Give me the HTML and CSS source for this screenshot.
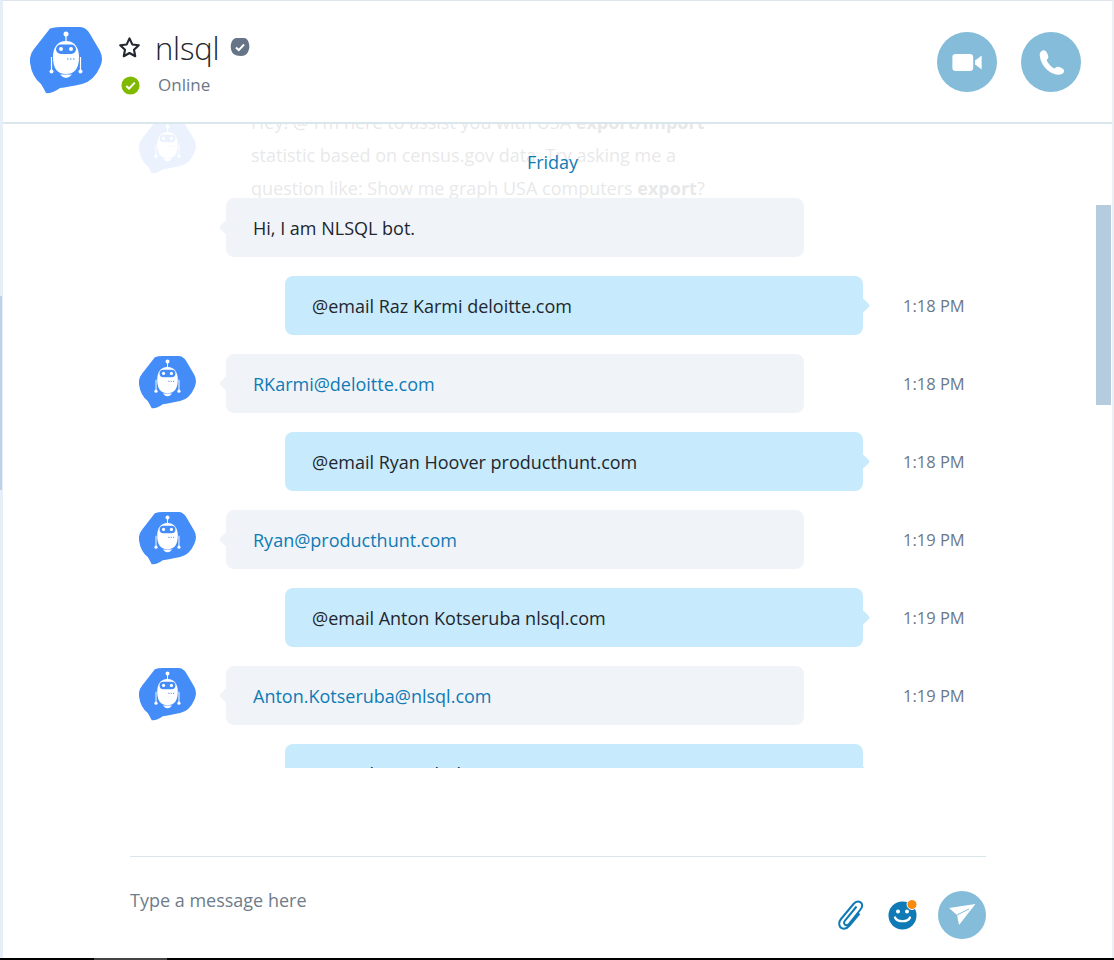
FILE: index.html
```html
<!DOCTYPE html>
<html lang="en">
<head>
<meta charset="utf-8">
<title>nlsql chat</title>
<link rel="stylesheet" href="styles.css">
</head>
<body>
<svg class="defs" width="0" height="0" aria-hidden="true">
  <symbol id="bot" viewBox="0 0 72 67">
    <path fill="#448cf8" d="M20 1.500Q24 0 30 0L50 0Q56 0 60 7L70 24Q74 32 70 40Q64 54 52 57Q38 60 30 61Q22 67 16 66Q13 60 11 57Q2 50 0 36Q-1 28 4 22Z"/>
    <circle cx="36" cy="7" r="2.500" fill="#fff"/>
    <path d="M36 8V16M21.500 30V44M50.500 30V44" stroke="#fff" stroke-width="1.200" fill="none"/>
    <circle cx="21.500" cy="44.500" r="2" fill="#fff"/>
    <circle cx="50.500" cy="44.500" r="2" fill="#fff"/>
    <path fill="#fff" d="M36 14C45 14 49 21 49 30C49 41 45 47 36 47C27 47 23 41 23 30C23 21 27 14 36 14Z"/>
    <path fill="#fff" d="M30 47.500H42Q39 51 36 51Q33 51 30 47.500Z"/>
    <rect x="26" y="17.500" width="20" height="9.500" rx="4.750" fill="#448cf8"/>
    <circle cx="31" cy="22" r="2" fill="#fff"/>
    <circle cx="41" cy="22" r="2" fill="#fff"/>
    <path d="M37 32h1.500M40 32h1.500M43 32h1.500" stroke="#448cf8" stroke-width="1.200"/>
  </symbol>
</svg>
<div class="app">
  <div class="frame">
    <header class="header">
      <svg class="avatar-large"><use href="#bot"/></svg>
      <div class="identity">
        <div class="title-row">
          <svg class="star" viewBox="0 0 24 24"><path d="M12 2.500l2.900 6.300 6.800.8-5 4.700 1.300 6.800-6-3.400-6 3.400 1.300-6.800-5-4.700 6.800-.8z" fill="none" stroke="#22262e" stroke-width="2.200" stroke-linejoin="round"/></svg>
          <span class="name">nlsql</span>
          <svg class="verified" viewBox="0 0 20 20"><path d="M6 1H14Q17 1 18.500 5Q20.500 10 18 15Q16 19 11 19Q5 19 2.500 16Q0 12 1 7Q2 2 6 1Z" fill="#667487"/><path d="M6 10.500l2.800 2.600L14 7.500" fill="none" stroke="#fff" stroke-width="2"/></svg>
        </div>
        <div class="status-row">
          <svg class="online-dot" viewBox="0 0 20 20"><circle cx="10" cy="10" r="9.500" fill="#7fb900"/><path d="M5.500 10.500l3 2.800L14.500 7" fill="none" stroke="#fff" stroke-width="2.200"/></svg>
          <span class="status">Online</span>
        </div>
      </div>
      <div class="actions">
        <button class="round-btn" type="button" aria-label="Video call">
          <svg class="video" viewBox="0 0 32 18"><rect x="0" y="0" width="22" height="18" rx="3.500" fill="#fff"/><path d="M24 7L31 1.500V16.500L24 11Z" fill="#fff"/></svg>
        </button>
        <button class="round-btn" type="button" aria-label="Call">
          <svg class="phone" viewBox="0 0 28 28"><path d="M5 1.500C3 2 1.500 4 1.800 7C2.500 13 5.500 18 10 22C14 25.500 19 27 23 26.500C25.500 26 27 24.500 27 23C27 21.500 26 20.500 24 19.500C22 18.500 20.500 18 19.500 18.500L17 20.200C14.500 19.500 9.800 14.500 9 11.500L10.500 9.500C11 8.500 10.500 6.500 9.500 4.500C8.500 2.500 7 1 5 1.500Z" fill="#fff"/></svg>
        </button>
      </div>
    </header>

    <main class="conversation">
      <div class="faded">
        <svg class="avatar-small faded-avatar"><use href="#bot"/></svg>
        <div class="faded-text">Hey! @ I'm here to assist you with USA <b>export/import</b> statistic based on census.gov data. Try asking me a question like: Show me graph USA computers <b>export</b>?</div>
      </div>
      <div class="day">Friday</div>

      <div class="row row-bot">
        <span class="avatar-slot"></span>
        <div class="bubble bot">Hi, I am NLSQL bot.</div>
      </div>
      <div class="row row-user">
        <div class="bubble user">@email Raz Karmi deloitte.com</div>
        <span class="time">1:18 PM</span>
      </div>
      <div class="row row-bot">
        <svg class="avatar-small"><use href="#bot"/></svg>
        <div class="bubble bot link">RKarmi@deloitte.com</div>
        <span class="time">1:18 PM</span>
      </div>
      <div class="row row-user">
        <div class="bubble user">@email Ryan Hoover producthunt.com</div>
        <span class="time">1:18 PM</span>
      </div>
      <div class="row row-bot">
        <svg class="avatar-small"><use href="#bot"/></svg>
        <div class="bubble bot link">Ryan@producthunt.com</div>
        <span class="time">1:19 PM</span>
      </div>
      <div class="row row-user">
        <div class="bubble user">@email Anton Kotseruba nlsql.com</div>
        <span class="time">1:19 PM</span>
      </div>
      <div class="row row-bot">
        <svg class="avatar-small"><use href="#bot"/></svg>
        <div class="bubble bot link">Anton.Kotseruba@nlsql.com</div>
        <span class="time">1:19 PM</span>
      </div>
      <div class="row row-user">
        <div class="bubble user">@email Lui @alrek.com</div>
      </div>
    </main>

    <footer class="composer">
      <div class="placeholder">Type a message here</div>
      <div class="tools">
        <svg class="clip" viewBox="0 0 28 30"><path d="M19.500 6.500L8 20.500C6.500 22.500 7 24 8.200 24.800C9.500 25.600 11 25 12.500 23.300L23.500 9.500C26 6.500 25.500 3.500 23.300 2.200C21 1 18.500 1.700 16.500 4L4 19C1.500 22 1.500 26 4.200 27.800C7 29.500 10 28.500 12.500 25.500L22.500 13.500" fill="none" stroke="#0f7ab5" stroke-width="2"/></svg>
        <svg class="smile" viewBox="0 0 30 30"><circle cx="14.500" cy="15.500" r="14" fill="#0f7ab5"/><circle cx="10" cy="11.500" r="2" fill="#fff"/><circle cx="19" cy="11.500" r="2" fill="#fff"/><path d="M7 17.500C9 22.500 20 22.500 22 17.500" fill="none" stroke="#fff" stroke-width="2.200" stroke-linecap="round"/><circle cx="24" cy="4.500" r="5" fill="#f88a0f" stroke="#fff" stroke-width="1"/></svg>
        <button class="send" type="button" aria-label="Send">
          <svg viewBox="0 0 27 22"><path d="M0 4L26.500 0L10 21L8 11Z" fill="#fff"/><path d="M8 11L20 5" stroke="#84bcd9" stroke-width="1"/></svg>
        </button>
      </div>
    </footer>

    <div class="scroll-thumb"></div>
    <div class="left-mark"></div>
  </div>
  <div class="taskbar"><div class="taskbar-thumb"></div></div>
</div>
</body>
</html>
```

FILE: styles.css
```css
* { box-sizing: border-box; }
html, body { margin: 0; padding: 0; background: #fff; }
body { font-family: "Open Sans", "Noto Sans", sans-serif; color: #22262e; overflow: hidden; }
.defs { position: absolute; }
.app { width: 1114px; height: 960px; display: flex; flex-direction: column; }
.frame {
  position: relative;
  height: 958px;
  display: flex;
  flex-direction: column;
  border-top: 1px solid #dfe5ec;
  border-left: 3px solid #e6eef7;
  border-right: 2px solid #eceff3;
}
.taskbar { height: 2px; background: #000; }
.taskbar-thumb { width: 73px; height: 2px; margin-left: 94px; background: #444; }

.header {
  height: 123px;
  flex: none;
  display: flex;
  align-items: flex-start;
  padding: 26px 31px 0 27px;
  border-bottom: 2px solid #d9e6ec;
  background: #fff;
}
.avatar-large { width: 72px; height: 67px; flex: none; }
.identity { margin-left: 16px; display: flex; flex-direction: column; }
.title-row { display: flex; align-items: center; height: 42px; }
.star { width: 23px; height: 23px; flex: none; margin-top: -2px; }
.name { margin-left: 14px; font-size: 31px; font-weight: 300; line-height: 42px; letter-spacing: -0.2px; color: #22262e; }
.verified { width: 20px; height: 20px; margin-left: 11px; margin-top: -2px; }
.status-row { display: flex; align-items: center; margin-top: 4px; padding-left: 3px; height: 24px; }
.online-dot { width: 19px; height: 19px; }
.status { margin-left: 18px; font-size: 17px; color: #6b7888; line-height: 24px; }
.actions { margin-left: auto; display: flex; gap: 24px; margin-top: 5px; }
.round-btn {
  width: 60px; height: 60px; border: 0; padding: 0; border-radius: 50%;
  background: #84bcd9; display: flex; align-items: center; justify-content: center;
}
.video { width: 31px; height: 17px; }
.phone { width: 27px; height: 27px; }

.conversation {
  position: relative;
  height: 644px;
  flex: none;
  overflow: hidden;
  display: flex;
  flex-direction: column;
  gap: 19px;
}
.faded {
  height: 74px;
  margin-bottom: -19px;
  flex: none;
  overflow: hidden;
  display: flex;
  opacity: 0.1;
  padding-left: 136px;
}
.faded-avatar { margin-top: -29px; }
.faded-text {
  margin-left: 30px;
  width: 578px;
  height: 120px;
  margin-top: -18px;
  padding: 0 60px 0 25px;
  font-size: 18px;
  line-height: 33px;
  color: #22262e;
  white-space: normal;
}
.day {
  position: absolute;
  left: 0; right: 0; top: 25px;
  padding-right: 10px;
  text-align: center;
  font-size: 18px;
  line-height: 26px;
  color: #0f7ab5;
}
.row { display: flex; align-items: center; height: 59px; flex: none; position: relative; }
.row-bot { padding-left: 136px; }
.row-user { padding-left: 282px; }
.avatar-small { width: 57px; height: 53px; flex: none; margin-top: -3px; }
.avatar-slot { width: 57px; flex: none; }
.bubble {
  position: relative;
  height: 59px;
  width: 578px;
  padding: 0 27px;
  display: flex;
  align-items: center;
  font-size: 18px;
  border-radius: 8px;
  color: #22262e;
}
.bubble::after {
  content: "";
  position: absolute;
  top: 24px;
  width: 11px;
  height: 11px;
  transform: rotate(45deg);
  border-radius: 2px;
}
.bot { margin-left: 30px; background: #f0f4f9; }
.bot::after { left: -5px; background: #f0f4f9; }
.user { background: #c7ebfc; }
.user::after { right: -5px; background: #c7ebfc; }
.row-bot:first-of-type .bubble { border-radius: 0 0 8px 8px; }
.link { color: #0f7ab5; }
.time { position: absolute; left: 900px; font-size: 16.500px; color: #6b7888; }

.composer {
  flex: 1;
  background: #fff;
  margin: 88px 126px 0 127px;
  border-top: 1px solid #d9e6ea;
  position: relative;
  display: flex;
  justify-content: space-between;
  align-items: flex-start;
}
.placeholder { margin-top: 30px; font-size: 18px; line-height: 26px; color: #6f7c8a; }
.tools { display: flex; align-items: center; margin-top: 34px; }
.clip { width: 28px; height: 30px; }
.smile { width: 30px; height: 30px; margin-left: 23px; }
.send {
  width: 48px; height: 48px; border: 0; padding: 0; border-radius: 50%;
  margin-left: 20px;
  background: #84bcd9; display: flex; align-items: center; justify-content: center;
}
.send svg { width: 27px; height: 22px; }

.scroll-thumb { position: absolute; left: 1093px; top: 204px; width: 15px; height: 200px; background: #b5cbde; }
.left-mark { position: absolute; left: -3px; top: 295px; width: 2px; height: 194px; background: #bcd2e6; }
```
